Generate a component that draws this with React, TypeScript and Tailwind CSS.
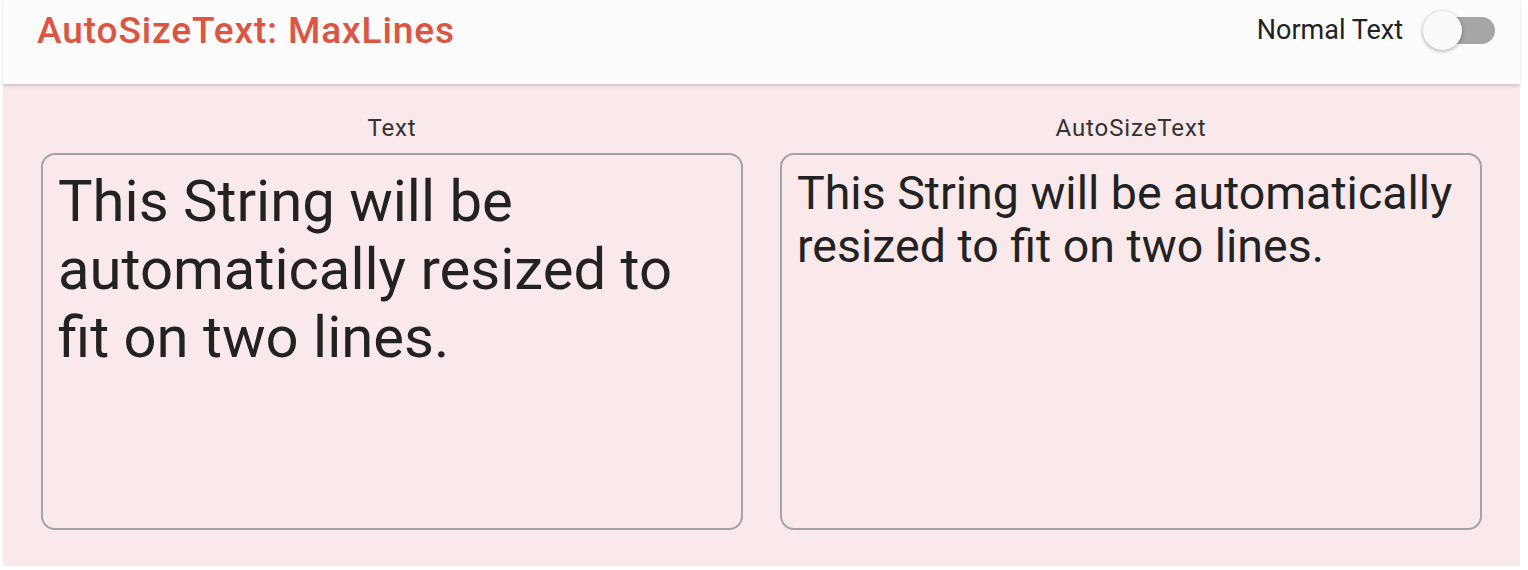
import React from "react";

export default function App() {
  const font = { fontFamily: "Roboto, 'Noto Sans', sans-serif" };
  return (
    <div className="w-[1528px] h-[570px] bg-white overflow-hidden" style={font}>
      <div className="flex flex-col h-full pl-[3px] pr-[8px] pb-[4px]">
        <header className="h-[84px] shrink-0 bg-[#fcfcfc] flex items-center justify-between pl-[34px] pr-[25px] pb-[24px] relative z-10 shadow-[0_2px_3px_rgba(0,0,0,0.16)]">
          <h1 className="text-[37px] font-medium tracking-[0.9px] text-[#e0533f] leading-none">AutoSizeText: MaxLines</h1>
          <div className="flex items-center gap-[20px]">
            <span className="text-[27px] text-[#222] leading-none">Normal Text</span>
            <div className="relative w-[72px] h-[40px] flex items-center">
              <div className="absolute left-[7px] right-0 h-[27px] rounded-full bg-[#a6a6a6]" />
              <div className="absolute left-0 w-[39px] h-[39px] rounded-full bg-[#fafafa] shadow-[0_1px_4px_rgba(0,0,0,0.35)]" />
            </div>
          </div>
        </header>
        <main className="flex-1 bg-[#fae9eb] grid grid-cols-2 gap-[37px] pl-[38px] pr-[38px] pt-[30px] pb-[36px]">
          <Panel label="Text">
            <p className="text-[58px] leading-[68px] text-[#222]">
              This String will be automatically resized to fit on two lines.
            </p>
          </Panel>
          <Panel label="AutoSizeText">
            <p className="text-[46.5px] leading-[53px] text-[#222]">
              This String will be automatically resized to fit on two lines.
            </p>
          </Panel>
        </main>
      </div>
    </div>
  );
}

function Panel({ label, children }: { label: string; children: React.ReactNode }) {
  return (
    <div className="flex flex-col">
      <div className="text-center text-[24px] tracking-[0.9px] text-[#333] leading-[28px] mb-[11px]">{label}</div>
      <div className="flex-1 border-2 border-[#a3a3a3] rounded-[14px] pl-[15px] pr-[8px] pt-[12px]">{children}</div>
    </div>
  );
}
